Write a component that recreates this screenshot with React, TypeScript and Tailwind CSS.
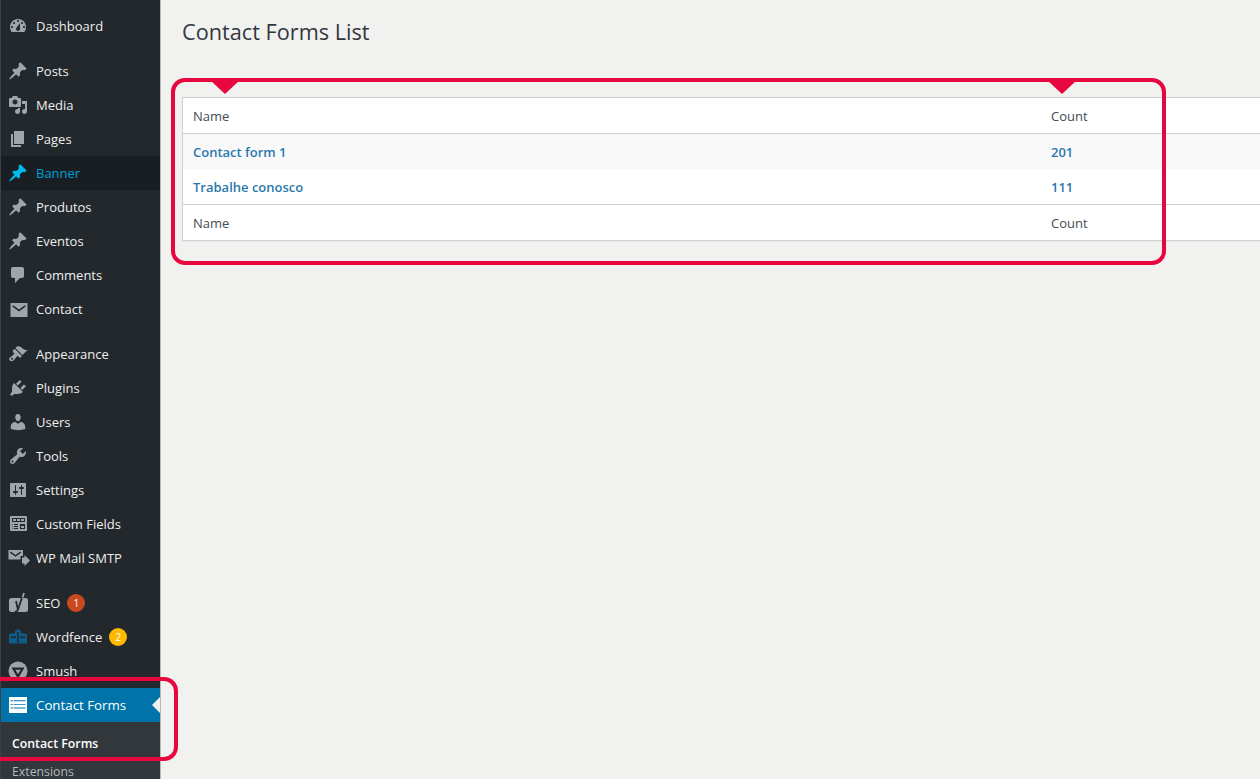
import type { ReactNode } from "react";

const ICONS: Record<string, string> = {
  dashboard:
    "M3.76 16h12.48c1.1-1.37 1.76-3.11 1.76-5 0-4.42-3.58-8-8-8s-8 3.58-8 8c0 1.89.66 3.63 1.76 5zM10 4c.55 0 1 .45 1 1s-.45 1-1 1-1-.45-1-1 .45-1 1-1zM6 6c.55 0 1 .45 1 1s-.45 1-1 1-1-.45-1-1 .45-1 1-1zm8 0c.55 0 1 .45 1 1s-.45 1-1 1-1-.45-1-1 .45-1 1-1zm-5.37 5.55L12 7v6c0 1.1-.9 2-2 2s-2-.9-2-2c0-.57.24-1.08.63-1.45zM4 10c.55 0 1 .45 1 1s-.45 1-1 1-1-.45-1-1 .45-1 1-1zm12 0c.55 0 1 .45 1 1s-.45 1-1 1-1-.45-1-1 .45-1 1-1z",
  pin: "M10.44 3.02l1.82-1.82 6.36 6.35-1.83 1.82c-1.05-.68-2.48-.57-3.41.36l-.75.75c-.92.93-1.04 2.35-.35 3.41l-1.83 1.82-2.41-2.41-2.8 2.79c-.42.42-3.38 2.71-3.8 2.29s1.86-3.39 2.28-3.81l2.79-2.79L4.1 9.36l1.83-1.82c1.05.69 2.48.57 3.4-.36l.75-.75c.93-.92 1.05-2.35.36-3.41z",
  media:
    "M13 11V4c0-.55-.45-1-1-1h-1.67L9 1H5L3.67 3H2c-.55 0-1 .45-1 1v7c0 .55.45 1 1 1h10c.55 0 1-.45 1-1zM7 4.5c1.38 0 2.5 1.12 2.5 2.5S8.38 9.5 7 9.5 4.5 8.38 4.5 7 5.62 4.5 7 4.5zM14 6h5v10.5c0 1.38-1.12 2.5-2.5 2.5S14 17.88 14 16.5s1.12-2.5 2.5-2.5c.17 0 .34.02.5.05V9h-3V6zm-4 8.05V13h2v3.5c0 1.38-1.12 2.5-2.5 2.5S7 17.88 7 16.5 8.12 14 9.5 14c.17 0 .34.02.5.05z",
  page: "M6 15V2h10v13H6zm-1 1h8v2H3V5h2v11z",
  comments:
    "M5 2h9c1.1 0 2 .9 2 2v7c0 1.1-.9 2-2 2h-2l-5 5v-5H5c-1.1 0-2-.9-2-2V4c0-1.1.9-2 2-2z",
  email: "M2.5 4h17v14h-17zM5.200 6.200l-.9 1.300 6.700 5 6.700-5-.9-1.300-5.800 4.200z",
  appearance:
    "M14.48 11.06L7.41 3.99l1.5-1.5c.5-.56 2.3-.47 3.51.32 1.21.8 1.43 1.28 2.91 2.1 1.18.64 2.45 1.26 4.45.85zm-.71.71L6.7 4.7 4.93 6.47c-.39.39-.39 1.02 0 1.41l1.06 1.06c.39.39.39 1.03 0 1.42-.6.6-1.43 1.11-2.21 1.69-.35.26-.7.53-1.01.84C1.43 13.23.4 14.98 1.72 16.3c.19.19.34.35.34.35 1.3 1.32 3.05.29 4.37-1.05.3-.3.57-.66.84-1.01.58-.78 1.09-1.61 1.69-2.21.39-.39 1.02-.39 1.41 0l1.06 1.06c.39.39 1.02.39 1.41 0zm-9.05 3.62c-.39.39-1.02.39-1.41 0s-.39-1.02 0-1.41 1.02-.39 1.41 0 .39 1.02 0 1.41z",
  plugins:
    "M13.11 4.36L9.87 7.6 8 5.73l3.24-3.24c.35-.34 1.05-.2 1.56.32.52.51.66 1.21.31 1.55zm-8 1.77l.91-1.12 9.01 9.01-1.19.84c-.71.71-2.63 1.16-3.82 1.16H6.14L4.9 17.26c-.59.59-1.54.59-2.12 0-.59-.58-.59-1.53 0-2.12l1.24-1.24v-3.88c0-1.13.4-3.19 1.09-3.89zm7.26 3.97l3.24-3.24c.34-.35 1.04-.21 1.55.31.52.51.66 1.21.31 1.55l-3.24 3.25z",
  users:
    "M10 9.25c-2.27 0-2.73-3.44-2.73-3.44C7 4.02 7.82 2 9.97 2c2.16 0 2.98 2.02 2.71 3.81 0 0-.41 3.44-2.68 3.44zm0 2.57L12.72 10c2.39 0 4.52 2.33 4.52 4.53v2.49s-3.65 1.13-7.24 1.13c-3.65 0-7.24-1.13-7.24-1.13v-2.49c0-2.25 1.94-4.48 4.47-4.48z",
  tools:
    "M16.68 9.77c-1.34 1.34-3.3 1.67-4.95.99l-5.41 6.52c-.99.99-2.59.99-3.58 0s-.99-2.59 0-3.57l6.52-5.42c-.68-1.65-.35-3.61.99-4.95 1.28-1.28 3.12-1.62 4.72-1.06l-2.89 2.89 2.82 2.82 2.86-2.87c.53 1.58.18 3.39-1.08 4.65zM3.81 16.21c.4.39 1.04.39 1.43 0 .4-.4.4-1.04 0-1.43-.39-.4-1.03-.4-1.43 0-.39.39-.39 1.03 0 1.43z",
  settings:
    "M18 16V4c0-.55-.45-1-1-1H3c-.55 0-1 .45-1 1v12c0 .55.45 1 1 1h14c.55 0 1-.45 1-1zM8 11h1c.55 0 1 .45 1 1s-.45 1-1 1H8v1.5c0 .28-.22.5-.5.5s-.5-.22-.5-.5V13H6c-.55 0-1-.45-1-1s.45-1 1-1h1V5.5c0-.28.22-.5.5-.5s.5.22.5.5V11zm5-2h-1c-.55 0-1-.45-1-1s.45-1 1-1h1V5.5c0-.28.22-.5.5-.5s.5.22.5.5V7h1c.55 0 1 .45 1 1s-.45 1-1 1h-1v5.5c0 .28-.22.5-.5.5s-.5-.22-.5-.5V9z",
  fields:
    "M19 16V3c0-.55-.45-1-1-1H3c-.55 0-1 .45-1 1v13c0 .55.45 1 1 1h15c.55 0 1-.45 1-1zM4 4h13v4H4V4zm1 1v2h3V5H5zm4 0v2h3V5H9zm4 0v2h3V5h-3zm-8.5 5c.28 0 .5.22.5.5s-.22.5-.5.5-.5-.22-.5-.5.22-.5.5-.5zM6 10h4v1H6v-1zm6 0h5v5h-5v-5zm-7.5 2c.28 0 .5.22.5.5s-.22.5-.5.5-.5-.22-.5-.5.22-.5.5-.5zM6 12h4v1H6v-1zm7 0v2h3v-2h-3zm-8.500 2c.28 0 .5.22.5.5s-.22.5-.5.5-.5-.22-.5-.5.22-.5.5-.5zM6 14h4v1H6v-1z",
  smtp: "M.5 2h14.500v6h-2.500v3.500H.5zM2.700 3.500l-.8 1.200 5.600 4 5.600-4-.8-1.200-4.800 3.400zM14 9.500h2.500V7l5.500 5.500-5.500 5.500v-2.500H14z",
  fence:
    "M1 7l6-1V4l3-2 3 2v2l6 1v9.500H1zm2 2.500v1.500h5V9.500zm9 0v1.500h5V9.500zM9.300 5v11h1.400V5z",
  list: "M1 2h18v16H1zM2.500 5.300v.9H5v-.9zm3.200 0v.9h11.800v-.9zM2.500 8.900v.9H5v-.9zm3.200 0v.9h11.800v-.9zM2.500 12.500v.9H5v-.9zm3.200 0v.9h11.800v-.9z",
};

function Icon({ name, className }: { name: string; className: string }) {
  return (
    <svg viewBox="0 0 20 20" fill="currentColor" fillRule="evenodd" className={`h-5 w-5 shrink-0 overflow-visible ${className}`}>
      <path d={ICONS[name]} />
    </svg>
  );
}

function SeoIcon() {
  return (
    <svg viewBox="0 0 20 20" className="h-5 w-5 shrink-0 overflow-visible">
      <rect x="1" y="5" width="19" height="14" rx="2.5" fill="#a0a5aa" />
      <path d="M8 8l1.800 8M14.500 3l-4.300 13c-.6 1.800-1.700 2.800-3.400 3" fill="none" stroke="#23282d" strokeWidth="1.800" />
      <path d="M16 0l-1.500 4.500" fill="none" stroke="#a0a5aa" strokeWidth="1.800" />
    </svg>
  );
}

function SmushIcon() {
  return (
    <svg viewBox="0 0 20 20" className="h-5 w-5 shrink-0">
      <circle cx="10" cy="10" r="9.500" fill="#a0a5aa" />
      <path d="M3.500 6.500h13L10 17.800z" fill="#23282d" />
      <path d="M7.300 8.700h5.400L10 13.300z" fill="#a0a5aa" />
    </svg>
  );
}

function Badge({ children, className }: { children: ReactNode; className: string }) {
  return (
    <span className={`ml-[7px] flex h-[18px] w-[18px] items-center justify-center rounded-full text-[10px] text-white ${className}`}>
      {children}
    </span>
  );
}

function MenuItem({ icon, label, children, gap }: { icon: ReactNode | string; label: string; children?: ReactNode; gap?: boolean }) {
  return (
    <div className={`flex h-[34px] items-center pl-[7px] text-[#eeeeee] ${gap ? "mt-[11px]" : ""}`}>
      {typeof icon === "string" ? <Icon name={icon} className="text-[#a0a5aa]" /> : icon}
      <span className="ml-2 pt-[2px]">{label}</span>
      {children}
    </div>
  );
}

const rowClass = "grid grid-cols-[858px_1fr] pl-[10px] pt-[2px] items-center";

export default function App() {
  return (
    <div className="relative flex h-[779px] w-[1260px] overflow-hidden bg-[#f1f1f0] font-['Open_Sans','Noto_Sans',sans-serif] text-[13px]">
      {/* Admin menu */}
      <aside className="w-[161px] shrink-0 overflow-hidden border-l border-r border-l-[#3c4146] border-r-[#b9b9b9] bg-[#23282d] pt-[9px]">
        <MenuItem icon="dashboard" label="Dashboard" />
        <MenuItem icon="pin" label="Posts" gap />
        <MenuItem icon="media" label="Media" />
        <MenuItem icon="page" label="Pages" />
        <div className="flex h-[34px] items-center bg-[#191e23] pl-[7px] text-[#00a0d2]">
          <Icon name="pin" className="text-[#00b9eb]" />
          <span className="ml-2 pt-[2px]">Banner</span>
        </div>
        <MenuItem icon="pin" label="Produtos" />
        <MenuItem icon="pin" label="Eventos" />
        <MenuItem icon="comments" label="Comments" />
        <MenuItem icon="email" label="Contact" />
        <MenuItem icon="appearance" label="Appearance" gap />
        <MenuItem icon="plugins" label="Plugins" />
        <MenuItem icon="users" label="Users" />
        <MenuItem icon="tools" label="Tools" />
        <MenuItem icon="settings" label="Settings" />
        <MenuItem icon="fields" label="Custom Fields" />
        <MenuItem icon="smtp" label="WP Mail SMTP" />
        <MenuItem icon={<SeoIcon />} label="SEO" gap>
          <Badge className="bg-[#ca4a1f]">1</Badge>
        </MenuItem>
        <div className="flex h-[34px] items-center pl-[7px] text-[#eeeeee]">
          <Icon name="fence" className="text-[#0f5c84]" />
          <span className="ml-2 pt-[2px]">Wordfence</span>
          <Badge className="bg-[#ffb900]">2</Badge>
        </div>
        <MenuItem icon={<SmushIcon />} label="Smush" />
        <div className="relative flex h-[34px] items-center bg-[#0073aa] pl-[7px] text-white">
          <Icon name="list" className="text-white" />
          <span className="ml-2 pt-[2px] text-[13.3px]">Contact Forms</span>
          <span className="absolute right-0 top-[9px] border-y-8 border-r-8 border-y-transparent border-r-[#f1f1f0]" />
        </div>
        <div className="h-[60px] bg-[#32373c] pl-[11px] pt-[13px] text-[12.3px]">
          <div className="font-semibold leading-[18px] text-white">Contact Forms</div>
          <div className="mt-[10px] leading-[18px] text-[#b4b9be]">Extensions</div>
        </div>
      </aside>

      {/* Content */}
      <main className="min-w-0 flex-1 pl-[21px] pt-[16px]">
        <h1 className="text-[21.7px] leading-[32px] text-[#32373c]">Contact Forms List</h1>
        <div className="mt-[49px] w-[1100px] border border-[#d0d0d0] bg-white text-[#444b52] shadow-[0_1px_1px_rgba(0,0,0,0.04)]">
          <div className={`${rowClass} h-[36px] border-b border-[#d0d0d0]`}>
            <span>Name</span>
            <span>Count</span>
          </div>
          <div className={`${rowClass} h-[35px] bg-[#f9f9f9] font-semibold text-[#2a78ad]`}>
            <span>Contact form 1</span>
            <span>201</span>
          </div>
          <div className={`${rowClass} h-[35px] font-semibold text-[#2a78ad]`}>
            <span>Trabalhe conosco</span>
            <span>111</span>
          </div>
          <div className={`${rowClass} h-[36px] border-t border-[#d0d0d0]`}>
            <span>Name</span>
            <span>Count</span>
          </div>
        </div>
      </main>

      {/* Red annotations */}
      <div className="absolute left-[171px] top-[78px] h-[187px] w-[995px] rounded-[14px] border-4 border-[#e8063f]" />
      <div className="absolute left-[210px] top-[80px] border-x-[15px] border-t-[14px] border-x-transparent border-t-[#e8063f]" />
      <div className="absolute left-[1047px] top-[80px] border-x-[15px] border-t-[14px] border-x-transparent border-t-[#e8063f]" />
      <div className="absolute left-0 top-[677px] h-[84px] w-[178px] rounded-r-[14px] border-y-4 border-r-4 border-[#e8063f]" />
    </div>
  );
}
